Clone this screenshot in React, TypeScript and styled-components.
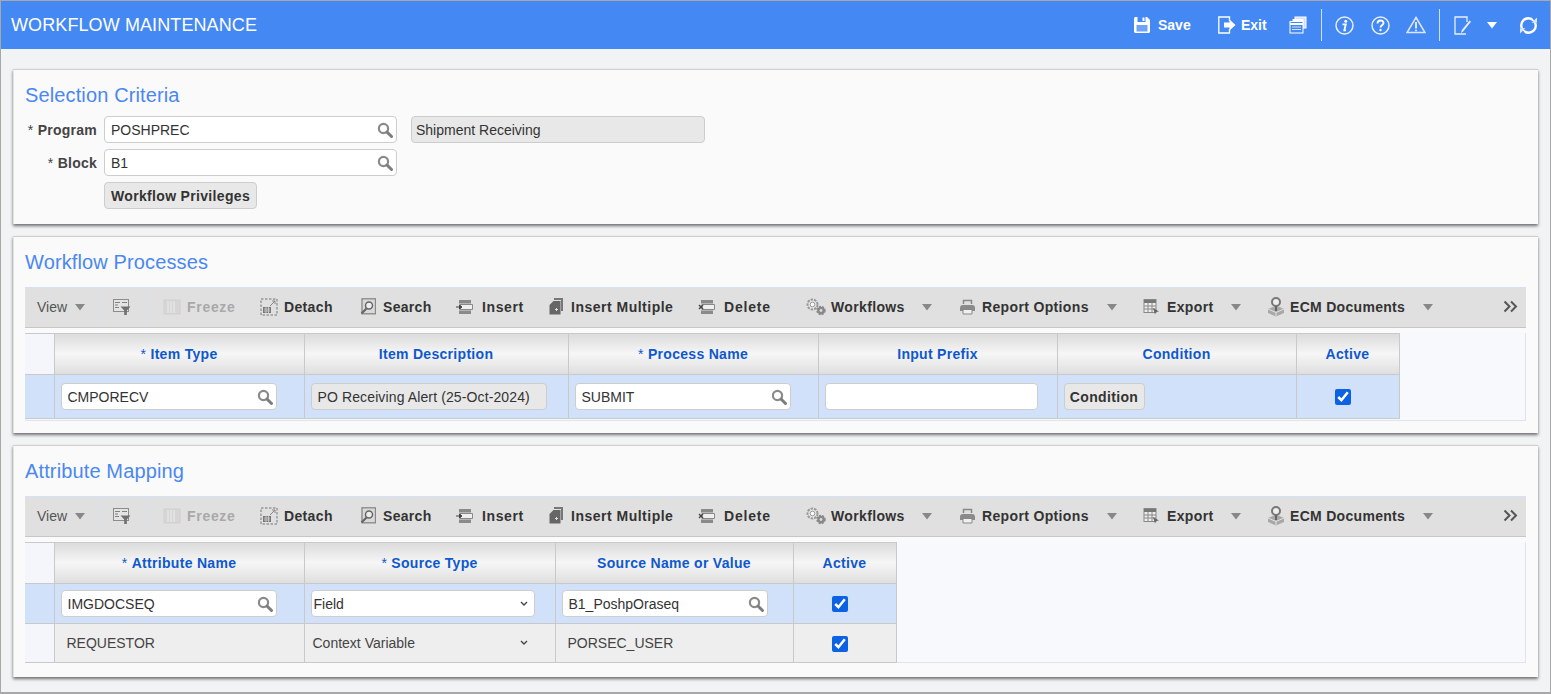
import styled, { createGlobalStyle } from "styled-components";

const GlobalStyle = createGlobalStyle`
    html, body { margin: 0; padding: 0; background: #f2f3f5; }
    body { font-family: "Liberation Sans", Arial, sans-serif; color: #333; overflow: hidden; }
    * { box-sizing: border-box; }
`

const Frame = styled.div`
    width: 1551px;
    height: 694px;
    border: 1px solid #a8a8a8;
    border-bottom-width: 2px;
    overflow: hidden;
`

const Header = styled.header`
    height: 48px;
    background: #4488f4;
    display: flex;
    align-items: center;
    padding: 0 12px 0 10px;
    color: #fff;
`

const AppTitle = styled.h1`
    margin: 0;
    font-size: 18px;
    letter-spacing: 0.1px;
    font-weight: 400;
    flex: 1;
`

const HeadAction = styled.div<{ $w: number; $gap?: number }>`
    width: ${(p) => p.$w}px;
    display: flex;
    align-items: center;
    gap: ${(p) => p.$gap ?? 7}px;
    font-size: 14px;
    font-weight: 700;
    flex: none;
`

const HeadSep = styled.div<{ $m: number }>`
    width: 1px;
    height: 32px;
    background: #cfe0fb;
    flex: none;
    margin-right: ${(p) => p.$m}px;
`

const Main = styled.main`
    padding: 20px 12px 0 12px;
    display: flex;
    flex-direction: column;
    gap: 12px;
`

const Panel = styled.section<{ $h: number }>`
    height: ${(p) => p.$h}px;
    background: #fafafa;
    border-top: 1px solid #cfcfcf;
    border-left: 1px solid #e2e2e2;
    box-shadow: 0 2px 3px rgba(0, 0, 0, 0.55);
    padding: 14px 12px 0 11px;
`

const PanelTitle = styled.h2`
    margin: 0;
    font-size: 20px;
    line-height: 23px;
    letter-spacing: 0.13px;
    font-weight: 400;
    color: #4a87f2;
`

const FormGrid = styled.div`
    margin-top: 9px;
    display: grid;
    grid-template-columns: 72px 293px 294px;
    grid-auto-rows: 27px;
    column-gap: 7px;
    row-gap: 6px;
    align-items: center;
`

const FieldLabel = styled.label`
    text-align: right;
    font-size: 14px;
    font-weight: 700;
    letter-spacing: 0.25px;
    color: #444;
    white-space: nowrap;
    span { font-weight: 400; }
`

const Box = styled.div<{ $w?: number; $ro?: boolean; $pl?: number; $pr?: number }>`
    width: ${(p) => (p.$w ? `${p.$w}px` : "100%")};
    height: 27px;
    display: flex;
    align-items: center;
    gap: 4px;
    padding: 0 ${(p) => p.$pr ?? 3}px 0 ${(p) => p.$pl ?? 6}px;
    font-size: 14px;
    color: #333;
    background: ${(p) => (p.$ro ? "#e8e8e8" : "#fff")};
    border: 1px solid #cdcdcd;
    border-radius: 4px;
    flex: none;
`

const BoxText = styled.span<{ $ls?: number }>`
    flex: 1;
    letter-spacing: ${(p) => p.$ls ?? 0}px;
    white-space: nowrap;
    overflow: hidden;
`

const ReadOnlySlot = styled.div`
    margin-left: 7px;
`

const GrayButton = styled.button<{ $w: number }>`
    width: ${(p) => p.$w}px;
    height: 27px;
    padding: 0;
    font: 700 14px "Liberation Sans", Arial, sans-serif;
    letter-spacing: 0.33px;
    color: #333;
    background: #e8e8e8;
    border: 1px solid #cdcdcd;
    border-radius: 4px;
    white-space: nowrap;
`

const Toolbar = styled.div`
    margin-top: 13px;
    height: 41px;
    background: #e0e0e0;
    border-top: 1px solid #d3e2f6;
    border-bottom: 1px solid #c6c6c6;
    display: flex;
    align-items: center;
    font-size: 14px;
    padding: 0 0 2px 12px;
`

const ToolItem = styled.div<{ $w: number; $off?: boolean; $plain?: boolean; $gap?: number; $ls?: number }>`
    width: ${(p) => p.$w}px;
    flex: none;
    display: flex;
    align-items: center;
    gap: ${(p) => p.$gap ?? 7}px;
    font-weight: ${(p) => (p.$plain ? 400 : 700)};
    letter-spacing: ${(p) => (p.$plain ? 0 : p.$ls ?? 0.3)}px;
    color: ${(p) => (p.$off ? "#a9a9a9" : p.$plain ? "#555" : "#333")};
    white-space: nowrap;
`

const ToolDivider = styled.div<{ $w: number }>`
    width: ${(p) => p.$w}px;
    height: 36px;
    flex: none;
    border-left: 1px solid #dbe2ea;
`

const TableWrap = styled.div<{ $h: number }>`
    margin-top: 5px;
    height: ${(p) => p.$h}px;
    background: #f8f9fd;
    border-right: 1px solid #e0e4ee;
    border-bottom: 1px solid #dfe3ec;
`

const Grid = styled.table`
    border-collapse: collapse;
    table-layout: fixed;
    font-size: 14px;
`

const HeadCell = styled.th<{ $w: number }>`
    width: ${(p) => p.$w}px;
    height: 41px;
    padding: 0;
    font-size: 14px;
    font-weight: 700;
    letter-spacing: 0.3px;
    color: #0e58cf;
    border: 1px solid #c9c9c9;
    background: linear-gradient(#dcdcdc 0%, #f6f6f6 48%, #dedede 100%);
    span { font-weight: 400; }
`

const HandleHead = styled.th`
    width: 29px;
    padding: 0;
    background: #f4f6fb;
    border: 1px solid #c9c9c9;
    border-left: 0;
`

const Row = styled.tr<{ $sel?: boolean; $h: number }>`
    height: ${(p) => p.$h}px;
    background: ${(p) => (p.$sel ? "#d1e1f9" : "#eeeeee")};
`

const RowHandle = styled.td<{ $sel?: boolean }>`
    padding: 0;
    background: ${(p) => (p.$sel ? "#d1e1f9" : "#f4f6fb")};
    border: 1px solid #c9c9c9;
    border-left: 0;
`

const Cell = styled.td<{ $center?: boolean }>`
    padding: 0 6px;
    color: #444;
    text-align: ${(p) => (p.$center ? "center" : "left")};
    border: 1px solid #c9c9c9;
`

const CellText = styled.div`
    padding: 0 10px 0 6px;
`

const PlainSelect = styled.div`
    width: 224px;
    display: flex;
    align-items: center;
    justify-content: space-between;
    padding: 0 7px 0 2px;
`

const Check = styled.input.attrs({ type: "checkbox", readOnly: true })`
    width: 16px;
    height: 16px;
    margin: 0 9px 0 0;
    accent-color: #0b62e4;
    display: inline-block;
    vertical-align: middle;
`

type IconProps = { c?: string };

const SearchIcon = () => (
    <svg width="16" height="16" viewBox="0 0 16 16" fill="none" style={{ flex: "none" }}>
        <circle cx="6.500" cy="6.500" r="4.600" stroke="#8a8a8a" strokeWidth="2.200" />
        <path d="M10 10l4.500 4.500" stroke="#7d7d7d" strokeWidth="3" strokeLinecap="round" />
    </svg>
);

const Caret = ({ c = "#888" }: IconProps) => (
    <svg width="12" height="8" viewBox="0 0 12 8" style={{ flex: "none" }}>
        <path d="M1 1h10L6 7.500z" fill={c} />
    </svg>
);

const Chevron = () => (
    <svg width="8" height="6" viewBox="0 0 8 6" fill="none" style={{ flex: "none" }}>
        <path d="M1 1l3 3 3-3" stroke="#444" strokeWidth="1.400" />
    </svg>
);

const SaveIcon = () => (
    <svg width="18" height="18" viewBox="0 0 18 18" fill="none">
        <path d="M1 2.500C1 1.700 1.700 1 2.500 1H14l3 3v11.500c0 .8-.7 1.500-1.500 1.500h-13C1.700 17 1 16.300 1 15.500z" fill="#fff" />
        <rect x="4.500" y="1" width="8" height="5" fill="#4488f4" />
        <rect x="9.500" y="1.500" width="2" height="3.500" fill="#fff" />
        <rect x="3.500" y="9" width="11" height="6.500" fill="#6ea3f7" />
    </svg>
);

const ExitIcon = () => (
    <svg width="18" height="18" viewBox="0 0 18 18" fill="none">
        <path d="M11.500 5V1H.8v16h10.700v-4" stroke="#fff" strokeWidth="1.300" />
        <path d="M6 6.500h5.500V3.500L17.500 9l-6 5.500v-3H6z" fill="#fff" />
    </svg>
);

const CopyIcon = () => (
    <svg width="18" height="18" viewBox="0 0 18 18" fill="none">
        <rect x="6" y="1" width="11" height="11" fill="#cfe0fb" stroke="#fff" />
        <rect x="3.500" y="3" width="11" height="4" fill="#fff" />
        <rect x="1" y="5.500" width="13" height="11.500" fill="#4488f4" stroke="#fff" />
        <path d="M1 8h13" stroke="#fff" strokeWidth="2" />
        <path d="M3 11h9M3 13.500h9" stroke="#cfe0fb" />
    </svg>
);

const InfoIcon = () => (
    <svg width="19" height="19" viewBox="0 0 19 19" fill="none">
        <circle cx="9.500" cy="9.500" r="8.500" stroke="#e6efff" strokeWidth="1.500" />
        <circle cx="10.800" cy="5.200" r="1.500" fill="#fff" />
        <path d="M7.500 8.300h3.300l-1.500 6h1.700" stroke="#fff" strokeWidth="1.800" />
    </svg>
);

const HelpIcon = () => (
    <svg width="19" height="19" viewBox="0 0 19 19" fill="none">
        <circle cx="9.500" cy="9.500" r="8.500" stroke="#e6efff" strokeWidth="1.500" />
        <path d="M6.500 7.500c0-4 6-4 6-.5 0 2.300-3 2.300-3 4.500" stroke="#fff" strokeWidth="1.900" />
        <circle cx="9.500" cy="14" r="1.200" fill="#fff" />
    </svg>
);

const WarnIcon = () => (
    <svg width="20" height="18" viewBox="0 0 20 18" fill="none">
        <path d="M10 1.500L19 16.500H1z" stroke="#dbe7fd" strokeWidth="1.500" />
        <path d="M10 6v6.500" stroke="#dbe7fd" strokeWidth="2" />
        <circle cx="10" cy="14.500" r="1" fill="#dbe7fd" />
    </svg>
);

const EditIcon = () => (
    <svg width="18" height="19" viewBox="0 0 18 19" fill="none">
        <path d="M13 6V1H1v17h11" stroke="#e6efff" strokeWidth="1.300" />
        <path d="M7 17l.8-3 7.700-9.500 1.500 1.200-7.700 9.500z" fill="#e6efff" />
    </svg>
);

const RefreshIcon = () => (
    <svg width="19" height="19" viewBox="0 0 19 19" fill="none">
        <circle cx="9.500" cy="9.500" r="7.300" stroke="#fff" strokeWidth="2.400" />
        <path d="M12 0h7v7h-2.500z" fill="#4488f4" />
        <path d="M7 19H0v-7h2.500z" fill="#4488f4" />
        <path d="M12.500 6.800h5.500V1.500zM6.500 12.200H1v5.300z" fill="#dbe7fd" />
    </svg>
);

const FilterIcon = () => (
    <svg width="18" height="16" viewBox="0 0 18 16" fill="none" style={{ flex: "none" }}>
        <rect x=".5" y=".5" width="15" height="12" fill="#e4e4e4" stroke="#8c8c8c" />
        <path d="M2 3.500h5M2 6h3M2 8.500h4M9 3.500h5" stroke="#808080" strokeWidth="1.200" />
        <path d="M7.500 7.500h10l-3.700 4v4.500h-2.600v-4.500z" fill="#707070" />
    </svg>
);

const FreezeIcon = () => (
    <svg width="18" height="16" viewBox="0 0 18 16" fill="none" style={{ flex: "none" }}>
        <rect x="1" y="1" width="16" height="14" fill="#d6d6d6" stroke="#cfcfcf" />
        <path d="M5 2v12M8 2v12M11 2v12" stroke="#ececec" />
    </svg>
);

const DetachIcon = () => (
    <svg width="18" height="18" viewBox="0 0 18 18" fill="none" style={{ flex: "none" }}>
        <rect x="1" y="1" width="16" height="16" stroke="#777" strokeDasharray="2.500 1.500" />
        <rect x="3" y="9" width="8" height="6" fill="#777" />
        <path d="M4 11h6M4 13h6M6 9v6M8.500 9v6" stroke="#ddd" strokeWidth=".7" />
        <path d="M10 8l5-5M12 3h3v3" stroke="#888" />
    </svg>
);

const ScanIcon = () => (
    <svg width="16" height="17" viewBox="0 0 16 17" fill="none" style={{ flex: "none" }}>
        <rect x="2" y=".8" width="13.500" height="15" fill="#d9d9d9" stroke="#888" strokeWidth="1.300" />
        <circle cx="9" cy="7.500" r="3.500" fill="#eee" stroke="#666" strokeWidth="1.500" />
        <path d="M6.500 10.500L1.500 15.500" stroke="#666" strokeWidth="2.200" />
    </svg>
);

const InsertIcon = ({ x }: { x?: boolean }) => (
    <svg width="18" height="16" viewBox="0 0 18 16" fill="none" style={{ flex: "none" }}>
        <path d="M3 1h12v3.500H3z" fill="#8a8a8a" />
        <path d="M4 5.500h12.500v5H4z" fill="#efefef" stroke="#888" />
        <path d="M3 11.500h12V15H3z" fill="#8a8a8a" />
        {x ? (
            <path d="M1 6l4 4m0-4l-4 4" stroke="#444" strokeWidth="1.400" />
        ) : (
            <path d="M0 8h5M3.500 6l2.500 2-2.500 2z" fill="#444" stroke="#444" />
        )}
    </svg>
);

const MultiIcon = () => (
    <svg width="15" height="17" viewBox="0 0 15 17" fill="none" style={{ flex: "none" }}>
        <path d="M5 0h9v13h-2V2H5z" fill="#777" />
        <path d="M4.500 3H11.500v13.500H.5V7z" fill="#666" />
        <path d="M6 11.500h3M7.500 10v3" stroke="#ddd" />
    </svg>
);

const GearsIcon = () => (
    <svg width="22" height="19" viewBox="0 0 22 19" fill="none" style={{ flex: "none" }}>
        <circle cx="7.500" cy="7.500" r="5" fill="#e4e4e4" stroke="#999" strokeWidth="2" strokeDasharray="2.500 1" />
        <circle cx="7.500" cy="7.500" r="2.300" fill="#fafafa" stroke="#999" />
        <circle cx="16" cy="13.500" r="3.700" fill="#888" stroke="#8a8a8a" strokeWidth="2" strokeDasharray="2 1" />
        <circle cx="16" cy="13.500" r="1.400" fill="#ddd" />
    </svg>
);

const PrinterIcon = () => (
    <svg width="17" height="16" viewBox="0 0 17 16" fill="none" style={{ flex: "none" }}>
        <path d="M4.500 5V1.500h8V5" stroke="#888" strokeWidth="1.500" />
        <path d="M1 9c0-2 1-3 3-3h9c2 0 3 1 3 3v3H1z" fill="#8a8a8a" />
        <path d="M4 10.500h9v4.500H4z" fill="#f0f0f0" stroke="#888" />
    </svg>
);

const ExportIcon = () => (
    <svg width="18" height="16" viewBox="0 0 18 16" fill="none" style={{ flex: "none" }}>
        <rect x="1" y=".5" width="12" height="13" fill="#eee" stroke="#888" />
        <path d="M1 1h12v3H1z" fill="#777" />
        <path d="M1 7h12M1 10h12M5 4v9M9 4v9" stroke="#888" />
        <path d="M10 9l6 3.500-3 .5-1 2.500z" fill="#666" />
    </svg>
);

const EcmIcon = () => (
    <svg width="18" height="20" viewBox="0 0 18 20" fill="none" style={{ flex: "none" }}>
        <path d="M1 12l8-3.500 8 3.500v4l-8 3.500L1 16z" fill="#a8a8a8" />
        <path d="M1 12l8 3.500 8-3.500" stroke="#e2e2e2" />
        <path d="M9 15.500V19" stroke="#e2e2e2" />
        <circle cx="9" cy="5" r="4" fill="#eee" stroke="#777" strokeWidth="2" />
        <path d="M9 9v5" stroke="#666" strokeWidth="2" />
    </svg>
);

const DoubleChevron = () => (
    <svg width="15" height="13" viewBox="0 0 15 13" fill="none" style={{ flex: "none" }}>
        <path d="M1.500 1.500l5 5-5 5M8 1.500l5 5-5 5" stroke="#555" strokeWidth="2" />
    </svg>
);

const ActionBar = () => (
    <Toolbar>
        <ToolItem $w={61} $plain>View <Caret /></ToolItem>
        <ToolDivider $w={15} />
        <ToolItem $w={33}><FilterIcon /></ToolItem>
        <ToolDivider $w={17} />
        <ToolItem $w={97} $off $ls={0.7} $gap={6}><FreezeIcon />Freeze</ToolItem>
        <ToolItem $w={81} $ls={0.35} $gap={6}><DetachIcon />Detach</ToolItem>
        <ToolDivider $w={19} />
        <ToolItem $w={96}><ScanIcon />Search</ToolItem>
        <ToolItem $w={93} $ls={0.6} $gap={8}><InsertIcon />Insert</ToolItem>
        <ToolItem $w={149} $ls={0.5}><MultiIcon />Insert Multiple</ToolItem>
        <ToolItem $w={90} $ls={0.8} $gap={8}><InsertIcon x />Delete</ToolItem>
        <ToolDivider $w={17} />
        <ToolItem $w={116} $gap={4} $ls={0.35}><GearsIcon />Workflows</ToolItem>
        <ToolItem $w={38}><Caret /></ToolItem>
        <ToolItem $w={147} $gap={6} $ls={0.35}><PrinterIcon />Report Options</ToolItem>
        <ToolItem $w={37}><Caret /></ToolItem>
        <ToolItem $w={87} $gap={6} $ls={0.35}><ExportIcon />Export</ToolItem>
        <ToolItem $w={37}><Caret /></ToolItem>
        <ToolItem $w={155} $gap={5} $ls={0.3}><EcmIcon />ECM Documents</ToolItem>
        <ToolItem $w={81}><Caret /></ToolItem>
        <DoubleChevron />
    </Toolbar>
);

const Req = () => <span>* </span>;

const Lookup = ({ value, w }: { value: string; w?: number }) => (
    <Box $w={w}>
        <BoxText>{value}</BoxText>
        <SearchIcon />
    </Box>
);

export default function App() {
    return (
        <Frame>
            <GlobalStyle />
            <Header>
                <AppTitle>WORKFLOW MAINTENANCE</AppTitle>
                <HeadAction $w={85}><SaveIcon />Save</HeadAction>
                <HeadAction $w={71} $gap={5}><ExitIcon />Exit</HeadAction>
                <HeadAction $w={32}><CopyIcon /></HeadAction>
                <HeadSep $m={13} />
                <HeadAction $w={36}><InfoIcon /></HeadAction>
                <HeadAction $w={35}><HelpIcon /></HeadAction>
                <HeadAction $w={33}><WarnIcon /></HeadAction>
                <HeadSep $m={14} />
                <HeadAction $w={32}><EditIcon /></HeadAction>
                <HeadAction $w={33}><Caret c="#fff" /></HeadAction>
                <HeadAction $w={19}><RefreshIcon /></HeadAction>
            </Header>
            <Main>
                <Panel $h={155}>
                    <PanelTitle>Selection Criteria</PanelTitle>
                    <FormGrid>
                        <FieldLabel><Req />Program</FieldLabel>
                        <Lookup value="POSHPREC" />
                        <ReadOnlySlot>
                            <Box $ro $w={294} $pl={4}><BoxText>Shipment Receiving</BoxText></Box>
                        </ReadOnlySlot>
                        <FieldLabel><Req />Block</FieldLabel>
                        <Lookup value="B1" />
                        <div />
                        <div />
                        <GrayButton $w={153}>Workflow Privileges</GrayButton>
                    </FormGrid>
                </Panel>
                <Panel $h={197}>
                    <PanelTitle>Workflow Processes</PanelTitle>
                    <ActionBar />
                    <TableWrap $h={88}>
                        <Grid>
                            <thead>
                                <tr>
                                    <HandleHead />
                                    <HeadCell $w={250}><Req />Item Type</HeadCell>
                                    <HeadCell $w={264}>Item Description</HeadCell>
                                    <HeadCell $w={250}><Req />Process Name</HeadCell>
                                    <HeadCell $w={239}>Input Prefix</HeadCell>
                                    <HeadCell $w={239}>Condition</HeadCell>
                                    <HeadCell $w={103}>Active</HeadCell>
                                </tr>
                            </thead>
                            <tbody>
                                <Row $sel $h={44}>
                                    <RowHandle $sel />
                                    <Cell><Lookup value="CMPORECV" w={216} /></Cell>
                                    <Cell><Box $ro $w={236} $pl={6}><BoxText $ls={0.12}>PO Receiving Alert (25-Oct-2024)</BoxText></Box></Cell>
                                    <Cell><Lookup value="SUBMIT" w={216} /></Cell>
                                    <Cell><Box $w={213} /></Cell>
                                    <Cell><GrayButton $w={81}>Condition</GrayButton></Cell>
                                    <Cell $center><Check defaultChecked /></Cell>
                                </Row>
                            </tbody>
                        </Grid>
                    </TableWrap>
                </Panel>
                <Panel $h={232}>
                    <PanelTitle>Attribute Mapping</PanelTitle>
                    <ActionBar />
                    <TableWrap $h={121}>
                        <Grid>
                            <thead>
                                <tr>
                                    <HandleHead />
                                    <HeadCell $w={250}><Req />Attribute Name</HeadCell>
                                    <HeadCell $w={251}><Req />Source Type</HeadCell>
                                    <HeadCell $w={238}>Source Name or Value</HeadCell>
                                    <HeadCell $w={103}>Active</HeadCell>
                                </tr>
                            </thead>
                            <tbody>
                                <Row $sel $h={40}>
                                    <RowHandle $sel />
                                    <Cell><Lookup value="IMGDOCSEQ" w={216} /></Cell>
                                    <Cell>
                                        <Box $w={224} $pl={2} $pr={6}>
                                            <BoxText>Field</BoxText>
                                            <Chevron />
                                        </Box>
                                    </Cell>
                                    <Cell><Lookup value="B1_PoshpOraseq" w={206} /></Cell>
                                    <Cell $center><Check defaultChecked /></Cell>
                                </Row>
                                <Row $h={39}>
                                    <RowHandle />
                                    <Cell><CellText>REQUESTOR</CellText></Cell>
                                    <Cell><PlainSelect>Context Variable<Chevron /></PlainSelect></Cell>
                                    <Cell><CellText>PORSEC_USER</CellText></Cell>
                                    <Cell $center><Check defaultChecked /></Cell>
                                </Row>
                            </tbody>
                        </Grid>
                    </TableWrap>
                </Panel>
            </Main>
        </Frame>
    );
}
